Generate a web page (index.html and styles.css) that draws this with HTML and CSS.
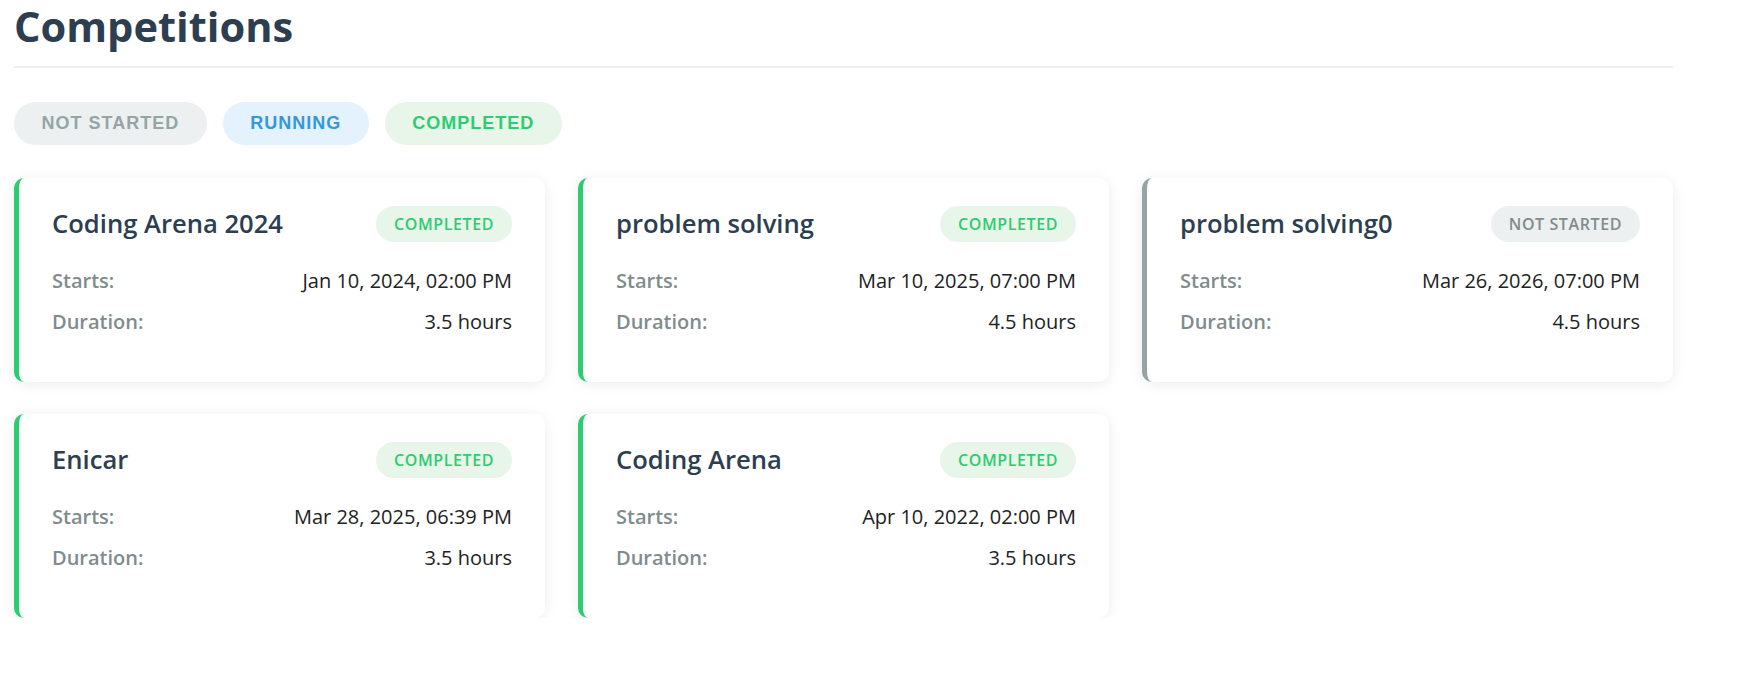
FILE: index.html
```html
<!DOCTYPE html>
<html lang="en">
<head>
<meta charset="utf-8">
<title>Competitions</title>
<link rel="stylesheet" href="styles.css">
</head>
<body>
<main class="page">
  <h1 class="page-title">Competitions</h1>
  <div class="filters">
    <button class="filter filter-not-started">NOT STARTED</button>
    <button class="filter filter-running">RUNNING</button>
    <button class="filter filter-completed">COMPLETED</button>
  </div>
  <section class="grid">
    <article class="card card-completed">
      <div class="card-header">
        <h2 class="card-title">Coding Arena 2024</h2>
        <span class="badge badge-completed">COMPLETED</span>
      </div>
      <div class="row"><span class="label">Starts:</span><span class="value">Jan 10, 2024, 02:00 PM</span></div>
      <div class="row"><span class="label">Duration:</span><span class="value">3.5 hours</span></div>
    </article>
    <article class="card card-completed">
      <div class="card-header">
        <h2 class="card-title">problem solving</h2>
        <span class="badge badge-completed">COMPLETED</span>
      </div>
      <div class="row"><span class="label">Starts:</span><span class="value">Mar 10, 2025, 07:00 PM</span></div>
      <div class="row"><span class="label">Duration:</span><span class="value">4.5 hours</span></div>
    </article>
    <article class="card card-not-started">
      <div class="card-header">
        <h2 class="card-title">problem solving0</h2>
        <span class="badge badge-not-started">NOT STARTED</span>
      </div>
      <div class="row"><span class="label">Starts:</span><span class="value">Mar 26, 2026, 07:00 PM</span></div>
      <div class="row"><span class="label">Duration:</span><span class="value">4.5 hours</span></div>
    </article>
    <article class="card card-completed">
      <div class="card-header">
        <h2 class="card-title">Enicar</h2>
        <span class="badge badge-completed">COMPLETED</span>
      </div>
      <div class="row"><span class="label">Starts:</span><span class="value">Mar 28, 2025, 06:39 PM</span></div>
      <div class="row"><span class="label">Duration:</span><span class="value">3.5 hours</span></div>
    </article>
    <article class="card card-completed">
      <div class="card-header">
        <h2 class="card-title">Coding Arena</h2>
        <span class="badge badge-completed">COMPLETED</span>
      </div>
      <div class="row"><span class="label">Starts:</span><span class="value">Apr 10, 2022, 02:00 PM</span></div>
      <div class="row"><span class="label">Duration:</span><span class="value">3.5 hours</span></div>
    </article>
  </section>
</main>
</body>
</html>
```

FILE: styles.css
```css
* {
  box-sizing: border-box;
}

body {
  margin: 0;
  background: #ffffff;
  font-family: "Open Sans", "Noto Sans", sans-serif;
  color: #2c3e50;
}

.page {
  width: 1659px;
  margin-left: 14px;
  padding-top: 2px;
}

.page-title {
  margin: 0;
  font-size: 41.6px;
  line-height: 48px;
  font-weight: 700;
  color: #2c3e50;
  padding-bottom: 16px;
  border-bottom: 2px solid #eeeeee;
}

.filters {
  display: flex;
  gap: 16px;
  margin-top: 34px;
  margin-bottom: 33px;
}

.filter {
  border: none;
  border-radius: 22px;
  padding: 11px 27.5px;
  font-family: "Liberation Sans", Arial, sans-serif;
  font-weight: 700;
  font-size: 18px;
  line-height: 21px;
  letter-spacing: 1px;
  cursor: pointer;
}

.filter-not-started {
  background: #ecf0f1;
  color: #95a5a6;
}

.filter-running {
  background: #e3f2fd;
  color: #3498db;
}

.filter-completed {
  background: #e8f5e9;
  color: #2ecc71;
}

.grid {
  display: grid;
  grid-template-columns: repeat(3, 1fr);
  column-gap: 33px;
  row-gap: 32px;
}

.card {
  background: #ffffff;
  border-radius: 10px;
  border-left: 5px solid #2ecc71;
  box-shadow: 0 2px 14px rgba(0, 0, 0, 0.08);
  padding: 28px 33px 45px 33px;
}

.card-completed {
  border-left-color: #2ecc71;
}

.card-not-started {
  border-left-color: #95a5a6;
}

.card-header {
  display: flex;
  align-items: center;
  justify-content: space-between;
  height: 36px;
  margin-bottom: 24px;
}

.card-title {
  margin: 0;
  font-size: 25.6px;
  line-height: 30px;
  font-weight: 600;
  color: #2c3e50;
}

.badge {
  border-radius: 20px;
  padding: 7px 18px;
  font-size: 16px;
  line-height: 22px;
  font-weight: 600;
  letter-spacing: 0.6px;
}

.badge-completed {
  background: #e8f5e9;
  color: #2ecc71;
}

.badge-not-started {
  background: #ecf0f1;
  color: #7f8c8d;
}

.row {
  display: flex;
  justify-content: space-between;
  font-size: 20px;
  line-height: 30px;
}

.row + .row {
  margin-top: 11px;
}

.label {
  color: #7f8c8d;
  font-weight: 600;
}

.value {
  color: #222222;
  font-weight: 400;
}
```
